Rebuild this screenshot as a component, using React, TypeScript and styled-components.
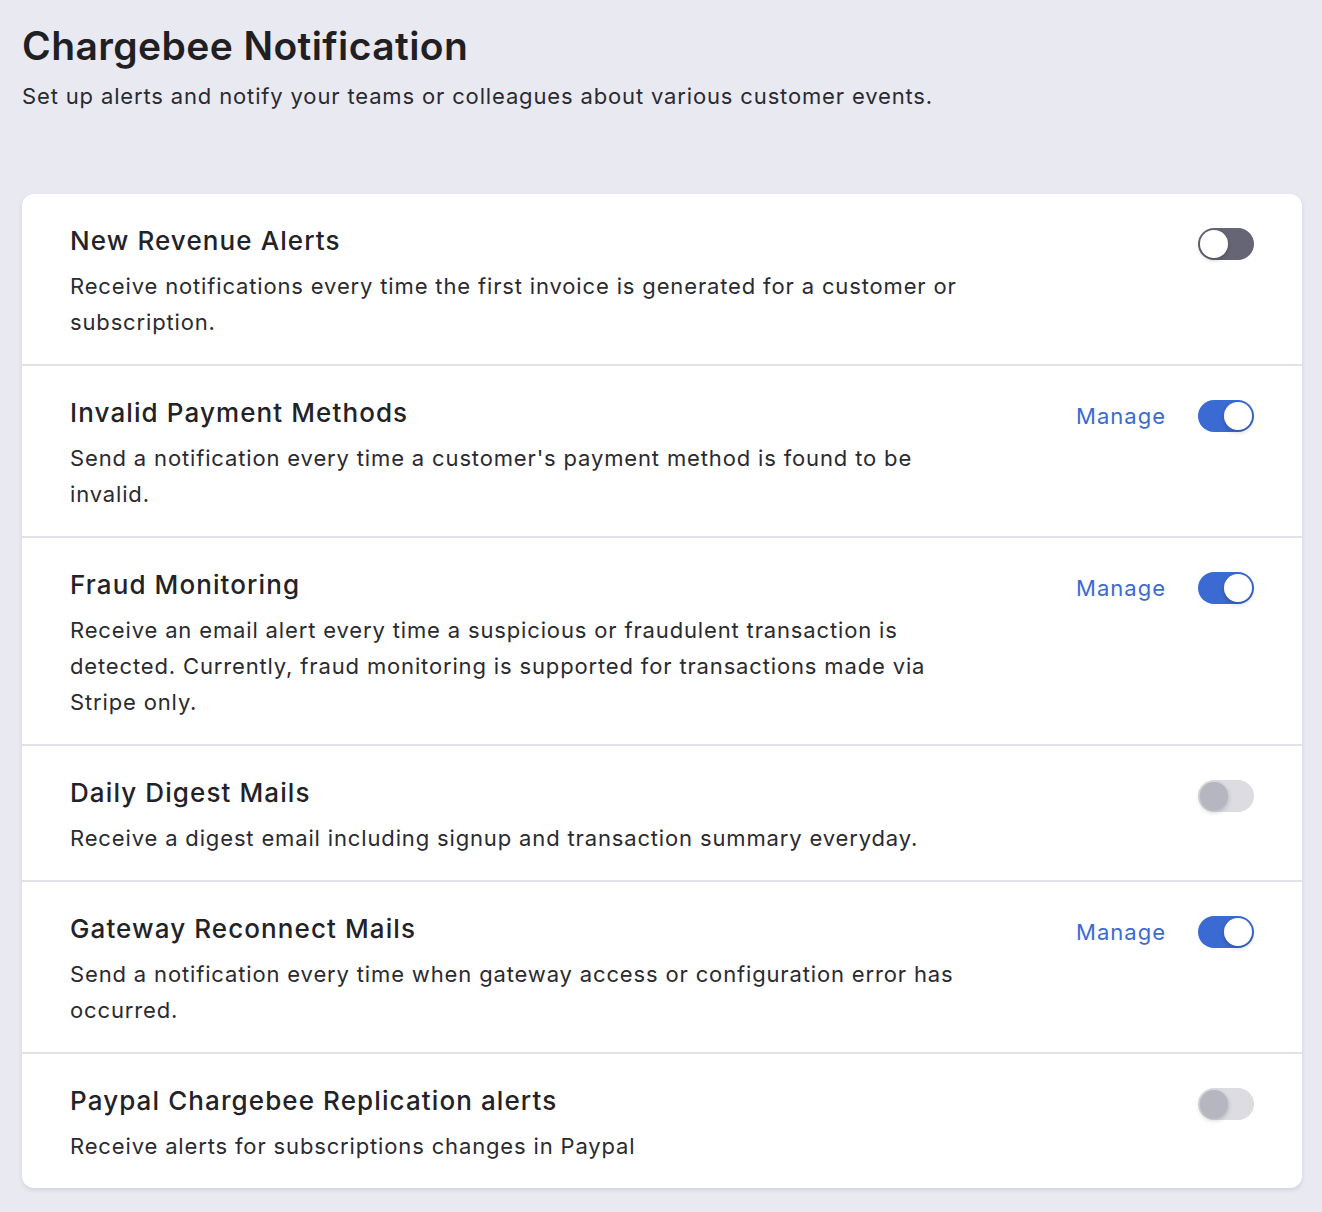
import React from 'react';
import styled, {createGlobalStyle} from 'styled-components';

const GlobalStyle = createGlobalStyle`
	body{
		margin:0;
		background:#e9e9f2;
		font-family:Inter, "Noto Sans", sans-serif;
		color:#26262c;
	}
`;

const Page = styled.div`
	padding:20px 20px 24px 22px;
`;

const Title = styled.h1`
	margin:0;
	font-size:39px;
	line-height:52px;
	font-weight:600;
	color:#1f1f24;
	letter-spacing:0.4px;
`;

const Subtitle = styled.p`
	margin:6px 0 0;
	font-size:22px;
	line-height:36px;
	color:#2a2a30;
	letter-spacing:0.85px;
`;

const Card = styled.div`
	margin-top:80px;
	background:#fff;
	border-radius:12px;
	box-shadow:0 2px 4px rgba(40,40,70,0.12);
	overflow:hidden;
`;

const Row = styled.div`
	display:flex;
	justify-content:space-between;
	align-items:flex-start;
	padding:30px 48px 24px 48px;
	& + &{
		border-top:2px solid #e1e1e7;
	}
`;

const Text = styled.div`
	max-width:908px;
`;

const RowTitle = styled.div`
	font-size:26px;
	line-height:34px;
	font-weight:500;
	color:#222228;
	letter-spacing:1.1px;
`;

const RowDesc = styled.div`
	margin-top:10px;
	font-size:22px;
	line-height:36px;
	color:#2a2a30;
	letter-spacing:0.85px;
`;

const Actions = styled.div`
	display:flex;
	align-items:center;
	gap:32px;
	height:32px;
	margin-top:4px;
`;

const Manage = styled.a`
	font-size:22px;
	color:#3b6ad2;
	text-decoration:none;
	letter-spacing:1px;
	cursor:pointer;
`;

type Mode = 'on' | 'off' | 'disabled';

const Track = styled.div<{$mode:Mode}>`
	position:relative;
	width:56px;
	height:32px;
	border-radius:16px;
	background:${p => p.$mode === 'on' ? '#3b6ad2' : p.$mode === 'off' ? '#656575' : '#dcdce2'};
`;

const Knob = styled.div<{$mode:Mode}>`
	position:absolute;
	top:2px;
	left:${p => p.$mode === 'on' ? '26px' : '2px'};
	width:28px;
	height:28px;
	border-radius:50%;
	background:${p => p.$mode === 'disabled' ? '#b6b6c0' : '#fff'};
	box-shadow:0 2px 5px rgba(0,0,0,0.22);
`;

const items: {title:string; desc:string; mode:Mode; manage?:boolean}[] = [
	{title:'New Revenue Alerts', desc:'Receive notifications every time the first invoice is generated for a customer or subscription.', mode:'off'},
	{title:'Invalid Payment Methods', desc:"Send a notification every time a customer's payment method is found to be invalid.", mode:'on', manage:true},
	{title:'Fraud Monitoring', desc:'Receive an email alert every time a suspicious or fraudulent transaction is detected. Currently, fraud monitoring is supported for transactions made via Stripe only.', mode:'on', manage:true},
	{title:'Daily Digest Mails', desc:'Receive a digest email including signup and transaction summary everyday.', mode:'disabled'},
	{title:'Gateway Reconnect Mails', desc:'Send a notification every time when gateway access or configuration error has occurred.', mode:'on', manage:true},
	{title:'Paypal Chargebee Replication alerts', desc:'Receive alerts for subscriptions changes in Paypal', mode:'disabled'},
];

function App() {
	return (
		<Page>
			<GlobalStyle/>
			<Title>Chargebee Notification</Title>
			<Subtitle>Set up alerts and notify your teams or colleagues about various customer events.</Subtitle>
			<Card>
				{items.map(item =>
					<Row key={item.title}>
						<Text>
							<RowTitle>{item.title}</RowTitle>
							<RowDesc>{item.desc}</RowDesc>
						</Text>
						<Actions>
							{item.manage && <Manage>Manage</Manage>}
							<Track $mode={item.mode}>
								<Knob $mode={item.mode}/>
							</Track>
						</Actions>
					</Row>
				)}
			</Card>
		</Page>
	);
}

export default App;
